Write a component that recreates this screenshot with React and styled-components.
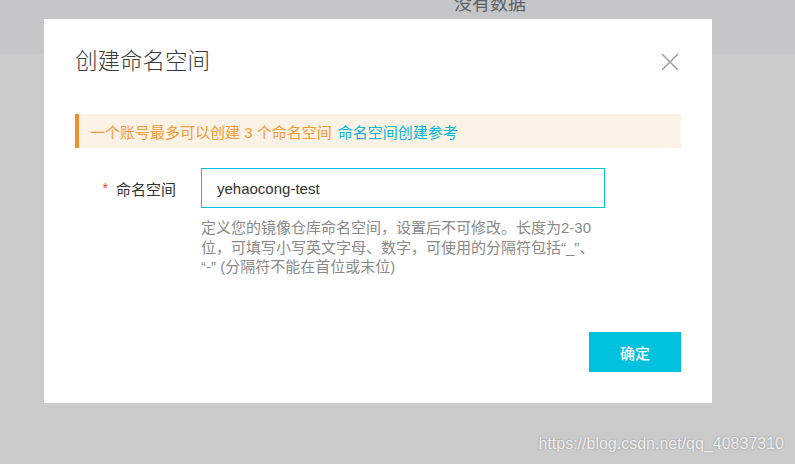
import React from 'react';
import styled, { createGlobalStyle } from 'styled-components';

const GlobalStyle = createGlobalStyle`
  html, body {
    margin: 0;
    padding: 0;
  }
  body {
    width: 795px;
    height: 464px;
    overflow: hidden;
    background: #cbcbcb;
    font-family: "Liberation Sans", "Noto Sans CJK SC", sans-serif;
  }
`;

const Page = styled.div`
  position: relative;
  width: 795px;
  height: 464px;
  overflow: hidden;
  background: #cbcbcb;
`;

const TopStrip = styled.div`
  height: 54px;
  background: #c5c6c8;
  display: flex;
  justify-content: center;
  padding-left: 185px;
  box-sizing: border-box;
`;

const EmptyText = styled.span`
  margin-top: -6px;
  font-size: 18px;
  line-height: 20px;
  color: #5e6165;
`;

const Modal = styled.div`
  position: absolute;
  left: 44px;
  top: 19px;
  width: 668px;
  height: 384px;
  box-sizing: border-box;
  padding: 30px 31px 31px;
  background: #fff;
  display: flex;
  flex-direction: column;
`;

const Header = styled.div`
  display: flex;
  align-items: center;
  justify-content: space-between;
  height: 26px;
`;

const Title = styled.h2`
  margin: 0;
  font-size: 22.5px;
  font-weight: 300;
  line-height: 26px;
  color: #373d41;
`;

const CloseButton = styled.button`
  border: 0;
  background: none;
  padding: 0;
  margin-right: 2px;
  width: 18px;
  height: 18px;
  cursor: pointer;
  display: flex;
`;

const Notice = styled.div`
  margin-top: 39px;
  height: 34px;
  display: flex;
  align-items: center;
  padding-left: 11px;
  border-left: 4px solid #f0912f;
  background: #fdf2e6;
  font-size: 15px;
  color: #f39b35;
`;

const NoticeLink = styled.a`
  margin-left: 6px;
  color: #00b9d6;
  text-decoration: none;
`;

const FormRow = styled.div`
  margin-top: 20px;
  display: grid;
  grid-template-columns: 101px 404px;
  column-gap: 25px;
`;

const Label = styled.label`
  height: 40px;
  display: flex;
  align-items: center;
  justify-content: flex-end;
  font-size: 15px;
  color: #333;
`;

const Required = styled.span`
  color: #e5483b;
  margin-right: 8px;
  font-size: 14px;
`;

const Field = styled.div`
  display: flex;
  flex-direction: column;
`;

const TextInput = styled.input`
  height: 40px;
  box-sizing: border-box;
  border: 1px solid #00c1de;
  outline: none;
  padding: 0 15px;
  font-family: "Liberation Sans", "Noto Sans CJK SC", sans-serif;
  font-size: 15px;
  color: #333;
`;

const Help = styled.p`
  margin: 10px 0 0;
  font-size: 15px;
  line-height: 19.5px;
  color: #8a8a8a;
`;

const HelpLine = styled.span`
  display: block;
  white-space: nowrap;
`;

const Footer = styled.div`
  margin-top: auto;
  display: flex;
  justify-content: flex-end;
`;

const PrimaryButton = styled.button`
  width: 92px;
  height: 40px;
  border: 0;
  background: #00c1de;
  color: #fff;
  font-family: "Liberation Sans", "Noto Sans CJK SC", sans-serif;
  font-size: 15px;
  font-weight: 500;
  cursor: pointer;
`;

const Watermark = styled.div`
  position: absolute;
  right: 11px;
  bottom: 11px;
  font-size: 16px;
  color: rgba(255, 255, 255, 0.85);
  text-shadow: 0 0 2px rgba(0, 0, 0, 0.35);
`;

const CloseIcon = () => (
  <svg width="18" height="18" viewBox="0 0 18 18">
    <path d="M1 1 L17 17 M17 1 L1 17" stroke="#9a9a9a" strokeWidth="1.4" fill="none" />
  </svg>
);

export default function App() {
  return (
    <Page>
      <GlobalStyle />
      <TopStrip>
        <EmptyText>没有数据</EmptyText>
      </TopStrip>
      <Modal>
        <Header>
          <Title>创建命名空间</Title>
          <CloseButton aria-label="关闭">
            <CloseIcon />
          </CloseButton>
        </Header>
        <Notice>
          一个账号最多可以创建 3 个命名空间
          <NoticeLink href="#">命名空间创建参考</NoticeLink>
        </Notice>
        <FormRow>
          <Label>
            <Required>*</Required>命名空间
          </Label>
          <Field>
            <TextInput defaultValue="yehaocong-test" />
            <Help>
              <HelpLine>定义您的镜像仓库命名空间，设置后不可修改。长度为2-30</HelpLine>
              <HelpLine>位，可填写小写英文字母、数字，可使用的分隔符包括“_”、</HelpLine>
              <HelpLine>“-” (分隔符不能在首位或末位)</HelpLine>
            </Help>
          </Field>
        </FormRow>
        <Footer>
          <PrimaryButton>确定</PrimaryButton>
        </Footer>
      </Modal>
      <Watermark>https://blog.csdn.net/qq_40837310</Watermark>
    </Page>
  );
}
